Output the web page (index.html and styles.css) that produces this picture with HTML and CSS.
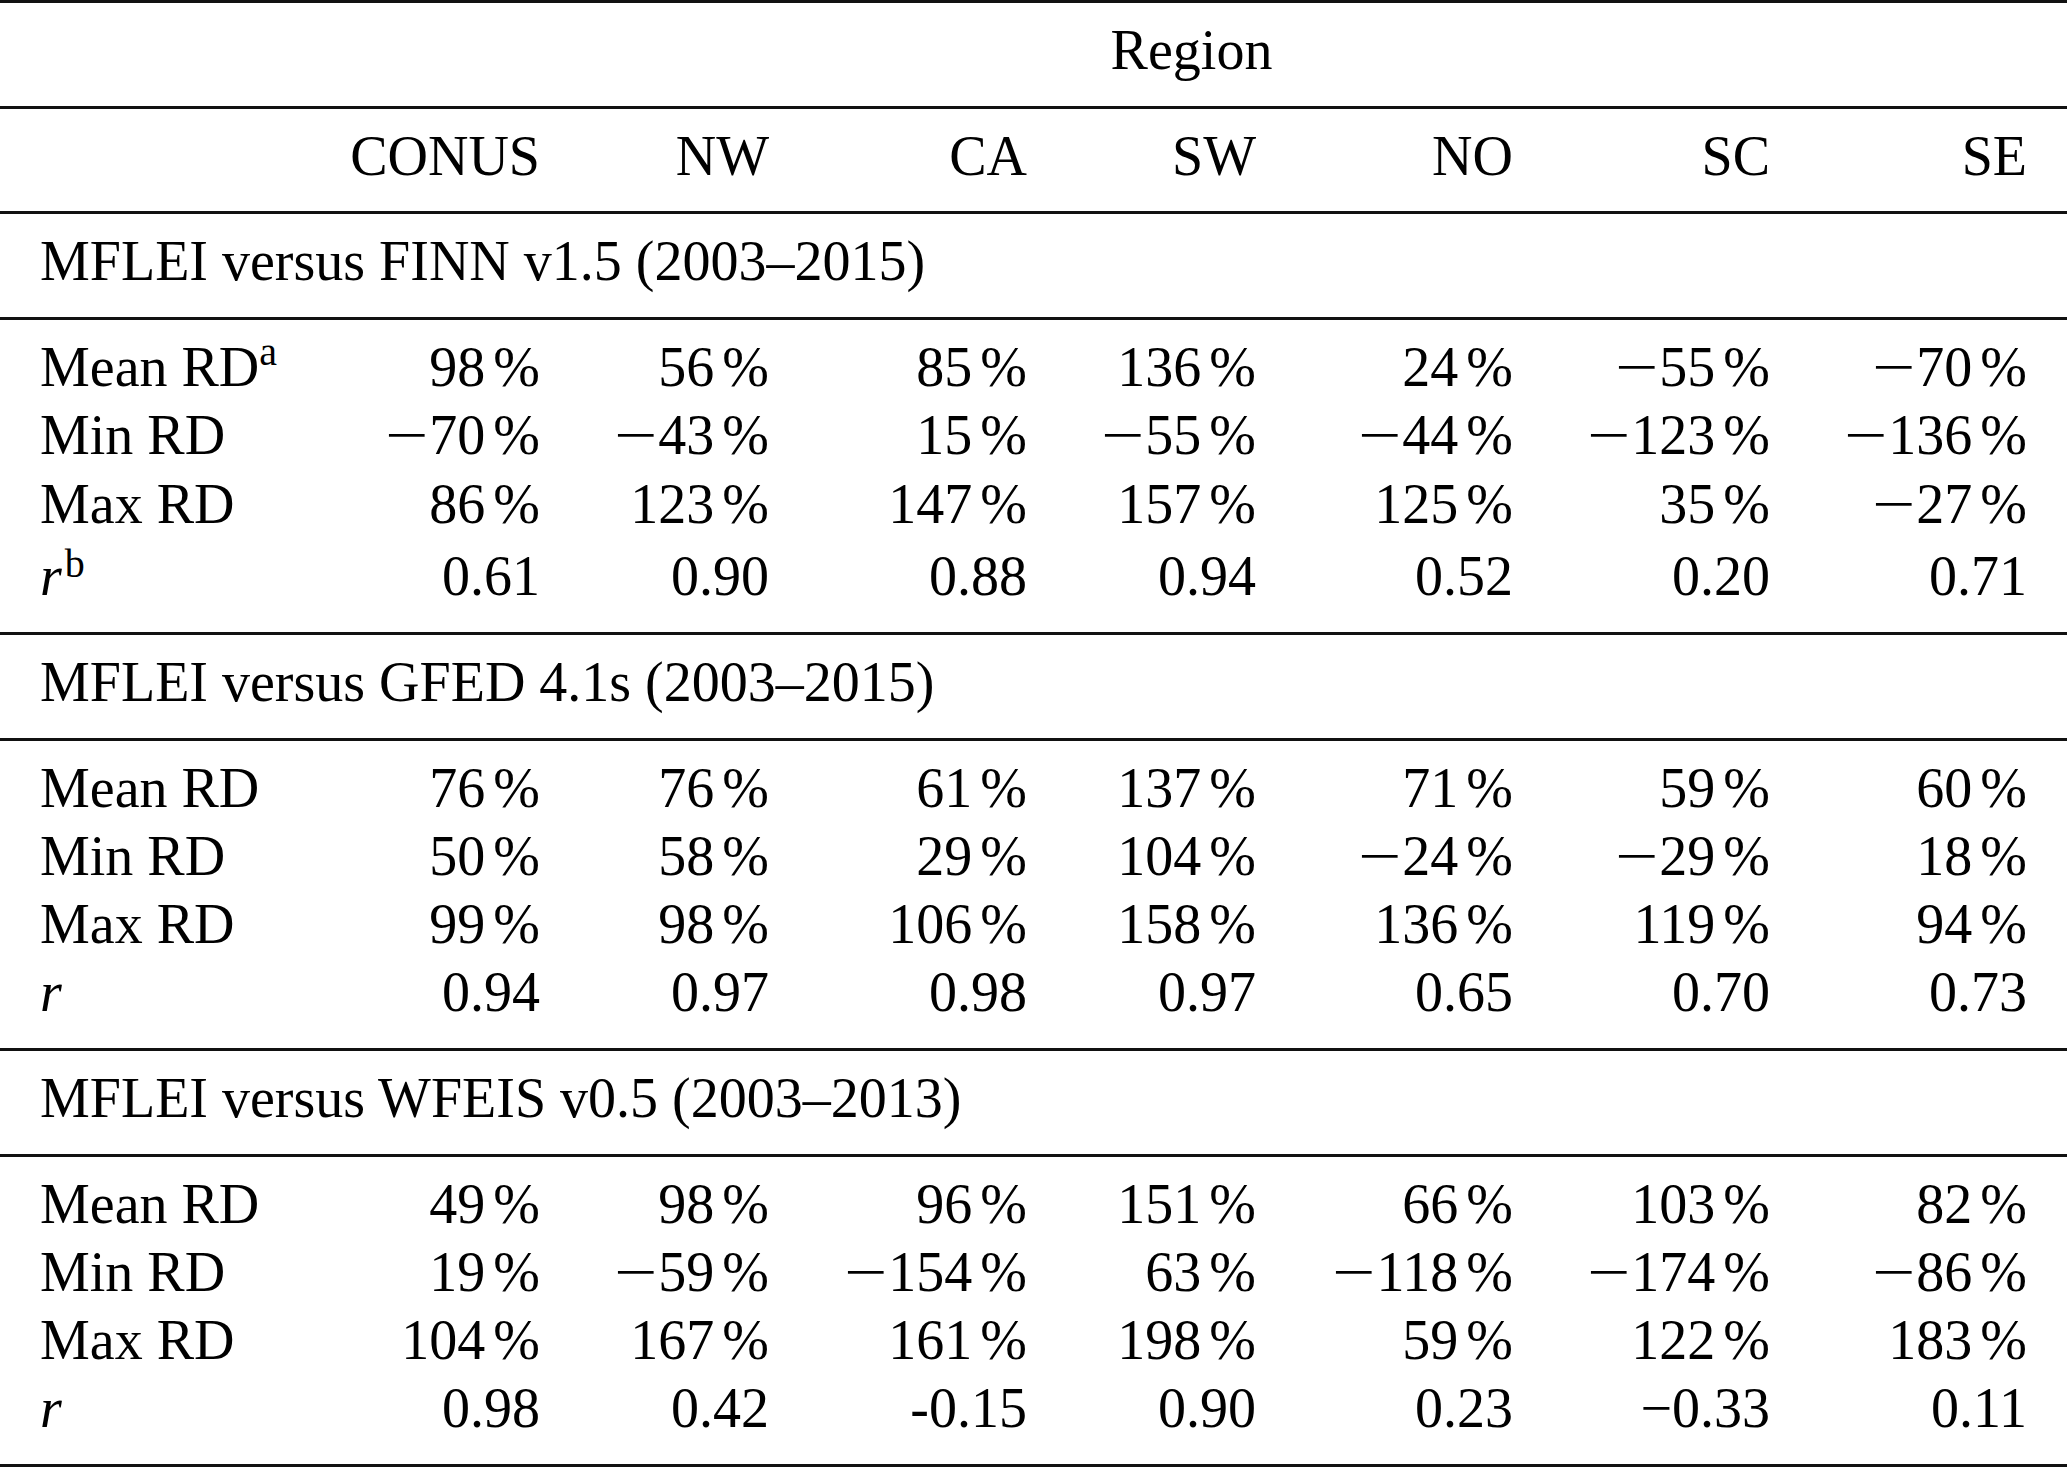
FILE: index.html
```html
<!DOCTYPE html>
<html lang="en">
<head>
<meta charset="utf-8">
<title>MFLEI comparison table</title>
<link rel="stylesheet" href="styles.css">
</head>
<body>
<div class="tbl">
  <div class="sec">
    <div class="row"><div class="region">Region</div></div>
  </div>
  <div class="sec hdr">
    <div class="row">
      <div class="lbl"></div>
      <div class="num">CONUS</div><div class="num">NW</div><div class="num">CA</div><div class="num">SW</div><div class="num">NO</div><div class="num">SC</div><div class="num">SE</div>
    </div>
  </div>
  <div class="sec"><div class="title">MFLEI versus FINN v1.5 (2003–2015)</div></div>
  <div class="sec">
    <div class="row">
      <div class="lbl">Mean RD<span class="fn">a</span></div>
      <div class="num">98&nbsp;%</div><div class="num">56&nbsp;%</div><div class="num">85&nbsp;%</div><div class="num">136&nbsp;%</div><div class="num">24&nbsp;%</div><div class="num"><span class="m">−</span>55&nbsp;%</div><div class="num"><span class="m">−</span>70&nbsp;%</div>
    </div>
    <div class="row">
      <div class="lbl">Min RD</div>
      <div class="num"><span class="m">−</span>70&nbsp;%</div><div class="num"><span class="m">−</span>43&nbsp;%</div><div class="num">15&nbsp;%</div><div class="num"><span class="m">−</span>55&nbsp;%</div><div class="num"><span class="m">−</span>44&nbsp;%</div><div class="num"><span class="m">−</span>123&nbsp;%</div><div class="num"><span class="m">−</span>136&nbsp;%</div>
    </div>
    <div class="row up1">
      <div class="lbl">Max RD</div>
      <div class="num">86&nbsp;%</div><div class="num">123&nbsp;%</div><div class="num">147&nbsp;%</div><div class="num">157&nbsp;%</div><div class="num">125&nbsp;%</div><div class="num">35&nbsp;%</div><div class="num"><span class="m">−</span>27&nbsp;%</div>
    </div>
    <div class="row up4">
      <div class="lbl"><span class="it">r</span><span class="fn fnb">b</span></div>
      <div class="num">0.61</div><div class="num">0.90</div><div class="num">0.88</div><div class="num">0.94</div><div class="num">0.52</div><div class="num">0.20</div><div class="num">0.71</div>
    </div>
  </div>
  <div class="sec"><div class="title">MFLEI versus GFED 4.1s (2003–2015)</div></div>
  <div class="sec">
    <div class="row">
      <div class="lbl">Mean RD</div>
      <div class="num">76&nbsp;%</div><div class="num">76&nbsp;%</div><div class="num">61&nbsp;%</div><div class="num">137&nbsp;%</div><div class="num">71&nbsp;%</div><div class="num">59&nbsp;%</div><div class="num">60&nbsp;%</div>
    </div>
    <div class="row">
      <div class="lbl">Min RD</div>
      <div class="num">50&nbsp;%</div><div class="num">58&nbsp;%</div><div class="num">29&nbsp;%</div><div class="num">104&nbsp;%</div><div class="num"><span class="m">−</span>24&nbsp;%</div><div class="num"><span class="m">−</span>29&nbsp;%</div><div class="num">18&nbsp;%</div>
    </div>
    <div class="row">
      <div class="lbl">Max RD</div>
      <div class="num">99&nbsp;%</div><div class="num">98&nbsp;%</div><div class="num">106&nbsp;%</div><div class="num">158&nbsp;%</div><div class="num">136&nbsp;%</div><div class="num">119&nbsp;%</div><div class="num">94&nbsp;%</div>
    </div>
    <div class="row">
      <div class="lbl"><span class="it">r</span></div>
      <div class="num">0.94</div><div class="num">0.97</div><div class="num">0.98</div><div class="num">0.97</div><div class="num">0.65</div><div class="num">0.70</div><div class="num">0.73</div>
    </div>
  </div>
  <div class="sec"><div class="title">MFLEI versus WFEIS v0.5 (2003–2013)</div></div>
  <div class="sec">
    <div class="row">
      <div class="lbl">Mean RD</div>
      <div class="num">49&nbsp;%</div><div class="num">98&nbsp;%</div><div class="num">96&nbsp;%</div><div class="num">151&nbsp;%</div><div class="num">66&nbsp;%</div><div class="num">103&nbsp;%</div><div class="num">82&nbsp;%</div>
    </div>
    <div class="row">
      <div class="lbl">Min RD</div>
      <div class="num">19&nbsp;%</div><div class="num"><span class="m">−</span>59&nbsp;%</div><div class="num"><span class="m">−</span>154&nbsp;%</div><div class="num">63&nbsp;%</div><div class="num"><span class="m">−</span>118&nbsp;%</div><div class="num"><span class="m">−</span>174&nbsp;%</div><div class="num"><span class="m">−</span>86&nbsp;%</div>
    </div>
    <div class="row">
      <div class="lbl">Max RD</div>
      <div class="num">104&nbsp;%</div><div class="num">167&nbsp;%</div><div class="num">161&nbsp;%</div><div class="num">198&nbsp;%</div><div class="num">59&nbsp;%</div><div class="num">122&nbsp;%</div><div class="num">183&nbsp;%</div>
    </div>
    <div class="row">
      <div class="lbl"><span class="it">r</span></div>
      <div class="num">0.98</div><div class="num">0.42</div><div class="num">-0.15</div><div class="num">0.90</div><div class="num">0.23</div><div class="num">−0.33</div><div class="num">0.11</div>
    </div>
  </div>
</div>
</body>
</html>
```

FILE: styles.css
```css
html, body {
  margin: 0;
  padding: 0;
  background: #ffffff;
}

body {
  color: #000000;
  font-family: "Liberation Serif", "Times New Roman", serif;
  font-size: 56px;
  line-height: 68px;
}

.tbl {
  width: 2067px;
}

.sec {
  border-top: 3px solid #111111;
  padding: 13px 0 22px;
}

.sec:last-child {
  border-bottom: 3px solid #111111;
}

.sec.hdr {
  padding-bottom: 21px;
}

.row {
  display: grid;
  grid-template-columns: 316px 264px 229px 258px 229px 257px 257px 257px;
}

.row.up1 {
  padding-top: 1px;
}

.row.up4 {
  padding-top: 4px;
}

.lbl {
  padding-left: 40px;
  white-space: nowrap;
}

.num {
  text-align: right;
  padding-right: 40px;
  white-space: nowrap;
  word-spacing: -6px;
}

.region {
  grid-column: 2 / -1;
  text-align: center;
}

.title {
  padding-left: 40px;
  white-space: nowrap;
}

.it {
  font-style: italic;
}

.fn {
  font-size: 40px;
  line-height: 0;
  vertical-align: 21px;
}

.fnb {
  margin-left: 3px;
  vertical-align: 18px;
}

.m {
  display: inline-block;
  width: 44px;
  text-align: left;
  transform: scaleX(1.37);
  transform-origin: 0 0;
}
```
